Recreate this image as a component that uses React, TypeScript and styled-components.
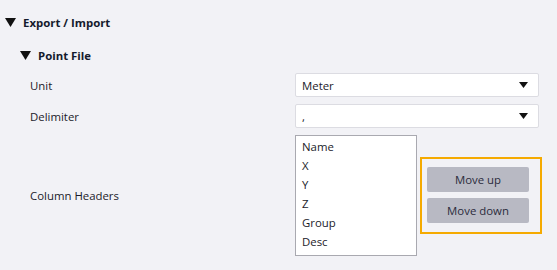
import React from "react";
import styled, { createGlobalStyle } from "styled-components";

const GlobalStyle = createGlobalStyle`
  html, body {
    margin: 0;
    padding: 0;
    background: #f2f2f6;
  }
  body {
    font-family: "Open Sans", "Noto Sans", sans-serif;
    font-size: 11.4px;
    color: #1b1b2a;
  }
`;

const Page = styled.div`
  width: 557px;
  height: 270px;
  background: #f2f2f6;
  overflow: hidden;
`;

const SectionHeader = styled.div<{ $indent: number }>`
  display: flex;
  align-items: center;
  gap: 7px;
  height: 22px;
  padding-left: ${({ $indent }) => $indent}px;
  font-weight: 700;
  color: #151a2c;
`;

const Body = styled.div`
  display: grid;
  grid-template-columns: 265px 244px;
  row-gap: 7px;
  padding-left: 30px;
  align-items: center;
`;

const Label = styled.div``;

const Select = styled.div`
  height: 22px;
  display: flex;
  align-items: center;
  justify-content: space-between;
  padding: 0 10px 0 6px;
  background: #ffffff;
  border: 1px solid #dcdce2;
  border-radius: 2px;
`;

const ListRow = styled.div`
  display: flex;
  align-items: center;
  gap: 3px;
  & > * {
    flex-shrink: 0;
  }
`;

const ListBox = styled.div`
  width: 120px;
  height: 118px;
  padding-top: 1px;
  background: #ffffff;
  border: 1px solid #a9a9b0;
  box-sizing: content-box;
`;

const ListItem = styled.div`
  height: 19px;
  line-height: 19px;
  padding-left: 6px;
`;

const Highlight = styled.div`
  display: flex;
  flex-direction: column;
  gap: 6px;
  padding: 8px 11px 9px 5px;
  border: 2px solid #f5aa00;
`;

const Button = styled.div`
  width: 102px;
  height: 25px;
  display: flex;
  align-items: center;
  justify-content: center;
  background: #b8b9c3;
  border-radius: 2px;
  color: #2b2b3c;
`;

const Triangle = ({ w, h }: { w: number; h: number }) => (
  <svg width={w} height={h} viewBox="0 0 10 8" preserveAspectRatio="none">
    <polygon points="0,0 10,0 5,8" fill="#111" />
  </svg>
);

const headers = ["Name", "X", "Y", "Z", "Group", "Desc"];

export default function App() {
  return (
    <Page>
      <GlobalStyle />
      <div style={{ height: 11 }} />
      <SectionHeader $indent={5}>
        <Triangle w={11} h={9} />
        Export / Import
      </SectionHeader>
      <div style={{ height: 11 }} />
      <SectionHeader $indent={20}>
        <Triangle w={11} h={9} />
        Point File
      </SectionHeader>
      <div style={{ height: 7 }} />
      <Body>
        <Label>Unit</Label>
        <Select>
          <span>Meter</span>
          <Triangle w={9} h={6} />
        </Select>
        <Label>Delimiter</Label>
        <Select>
          <span>,</span>
          <Triangle w={9} h={6} />
        </Select>
        <Label>Column Headers</Label>
        <ListRow>
          <ListBox>
            {headers.map((h) => (
              <ListItem key={h}>{h}</ListItem>
            ))}
          </ListBox>
          <Highlight>
            <Button>Move up</Button>
            <Button>Move down</Button>
          </Highlight>
        </ListRow>
      </Body>
    </Page>
  );
}
